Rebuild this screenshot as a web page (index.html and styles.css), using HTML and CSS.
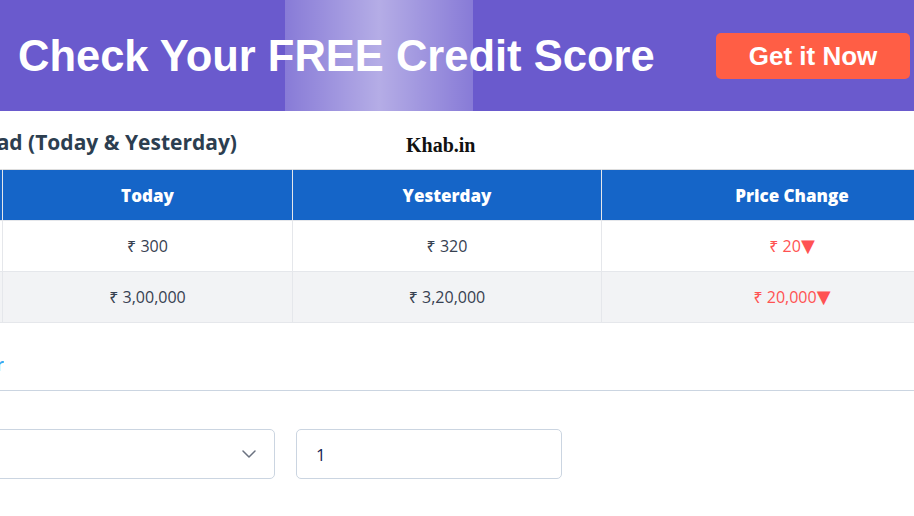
FILE: index.html
```html
<!DOCTYPE html>
<html lang="en">
<head>
<meta charset="utf-8">
<title>Rate Today &amp; Yesterday</title>
<link rel="stylesheet" href="styles.css">
</head>
<body>
<header class="banner">
  <h1 class="banner-title">Check Your FREE Credit Score</h1>
  <a class="banner-btn" href="#">Get it Now</a>
  <span class="shimmer"></span>
</header>

<main class="content">
  <div class="title-row">
    <h2 class="page-title">Silver Rate in Ahmedabad (Today &amp; Yesterday)</h2>
    <span class="brand">Khab.in</span>
  </div>

  <table class="rates">
    <colgroup>
      <col class="c-unit">
      <col class="c-today">
      <col class="c-yest">
      <col class="c-change">
    </colgroup>
    <thead>
      <tr>
        <th>Gram</th>
        <th>Today</th>
        <th>Yesterday</th>
        <th>Price Change</th>
      </tr>
    </thead>
    <tbody>
      <tr>
        <td>1 Gram</td>
        <td>₹ 300</td>
        <td>₹ 320</td>
        <td class="down">₹ 20<span class="arrow">▼</span></td>
      </tr>
      <tr class="alt">
        <td>1 Kg</td>
        <td>₹ 3,00,000</td>
        <td>₹ 3,20,000</td>
        <td class="down">₹ 20,000<span class="arrow">▼</span></td>
      </tr>
    </tbody>
  </table>

  <nav class="tabs">
    <span class="tab">Calculator</span>
  </nav>

  <form class="calc">
    <div class="select">
      <span class="select-value"></span>
      <svg class="chev" width="14" height="8" viewBox="0 0 14 8"><path d="M1 1l6 6 6-6" fill="none" stroke="#6b7280" stroke-width="1.5" stroke-linecap="round" stroke-linejoin="round"/></svg>
    </div>
    <div class="qty">1</div>
  </form>
</main>
</body>
</html>
```

FILE: styles.css
```css
* { box-sizing: border-box; }
html, body { margin: 0; padding: 0; }
body {
  background: #fff;
  overflow: hidden;
  width: 914px;
  height: 516px;
  font-family: "Open Sans", "Noto Sans", sans-serif;
  color: #333;
}

.banner {
  position: relative;
  height: 111px;
  background: #6a5acd;
  display: flex;
  align-items: center;
  justify-content: space-between;
  padding: 0 4px 0 18px;
  overflow: hidden;
}
.banner-title {
  margin: 0;
  font-family: "Liberation Sans", Arial, sans-serif;
  font-weight: 700;
  font-size: 43.5px;
  color: #fff;
  position: relative;
  z-index: 2;
  padding-top: 2px;
}
.banner-btn {
  width: 194px;
  height: 46px;
  margin-top: 1px;
  background: #ff5e45;
  border-radius: 5px;
  color: #fff;
  text-decoration: none;
  font-family: "Liberation Sans", Arial, sans-serif;
  font-weight: 700;
  font-size: 26px;
  display: flex;
  align-items: center;
  justify-content: center;
  position: relative;
  z-index: 2;
}
.shimmer {
  position: absolute;
  top: 0;
  left: 285px;
  width: 188px;
  height: 100%;
  background: linear-gradient(90deg, rgba(255,255,255,0.2) 0%, rgba(255,255,255,0.5) 50%, rgba(255,255,255,0.2) 100%);
  z-index: 1;
}

.content {
  margin-left: -300px;
  width: 1400px;
}

.title-row {
  display: flex;
  align-items: center;
  height: 58px;
}
.page-title {
  margin: 0;
  width: 537px;
  text-align: right;
  white-space: nowrap;
  overflow: hidden;
  font-size: 21px;
  font-weight: 700;
  color: #2c3e50;
  padding-top: 4px;
}
.brand {
  margin-left: 169px;
  font-family: "Liberation Serif", "Times New Roman", serif;
  font-weight: 700;
  font-size: 20px;
  color: #111;
  padding-top: 11px;
}

.rates {
  border-collapse: collapse;
  table-layout: fixed;
  width: 1282px;
  border-top: 1px solid #ddd;
}
.c-unit { width: 302px; }
.c-today { width: 290px; }
.c-yest { width: 309px; }
.c-change { width: 381px; }
.rates th, .rates td {
  border: 1px solid #e5e7eb;
  text-align: center;
  height: 51px;
  padding: 0 8px;
}
.rates th {
  background: #1565c8;
  color: #fff;
  font-weight: 800;
  font-size: 17px;
  border-color: #e5e7eb;
  border-top-color: #ddd;
}
.rates td {
  font-size: 16px;
  color: #374151;
}
.rates .alt td { background: #f2f3f5; }
.rates td.down { color: #ff5252; }
.arrow {
  font-family: "DejaVu Sans", sans-serif;
  font-size: 18px;
  line-height: 1;
}

.tabs {
  height: 68px;
  border-bottom: 1px solid #cbd5e1;
  display: flex;
  align-items: center;
}
.tab {
  width: 304px;
  text-align: right;
  white-space: nowrap;
  overflow: hidden;
  font-size: 18px;
  font-weight: 600;
  color: #38a8f0;
  padding-top: 14px;
}

.calc {
  display: flex;
  gap: 21px;
  margin-top: 38px;
}
.select {
  width: 575px;
  height: 50px;
  border: 1px solid #cbd5e1;
  border-radius: 5px;
  display: flex;
  align-items: center;
  justify-content: flex-end;
  padding-right: 18px;
  background: #fff;
}
.chev { display: block; }
.qty {
  width: 266px;
  height: 50px;
  border: 1px solid #cbd5e1;
  border-radius: 5px;
  display: flex;
  align-items: center;
  padding-left: 19px;
  font-size: 17px;
  color: #172554;
}
```
